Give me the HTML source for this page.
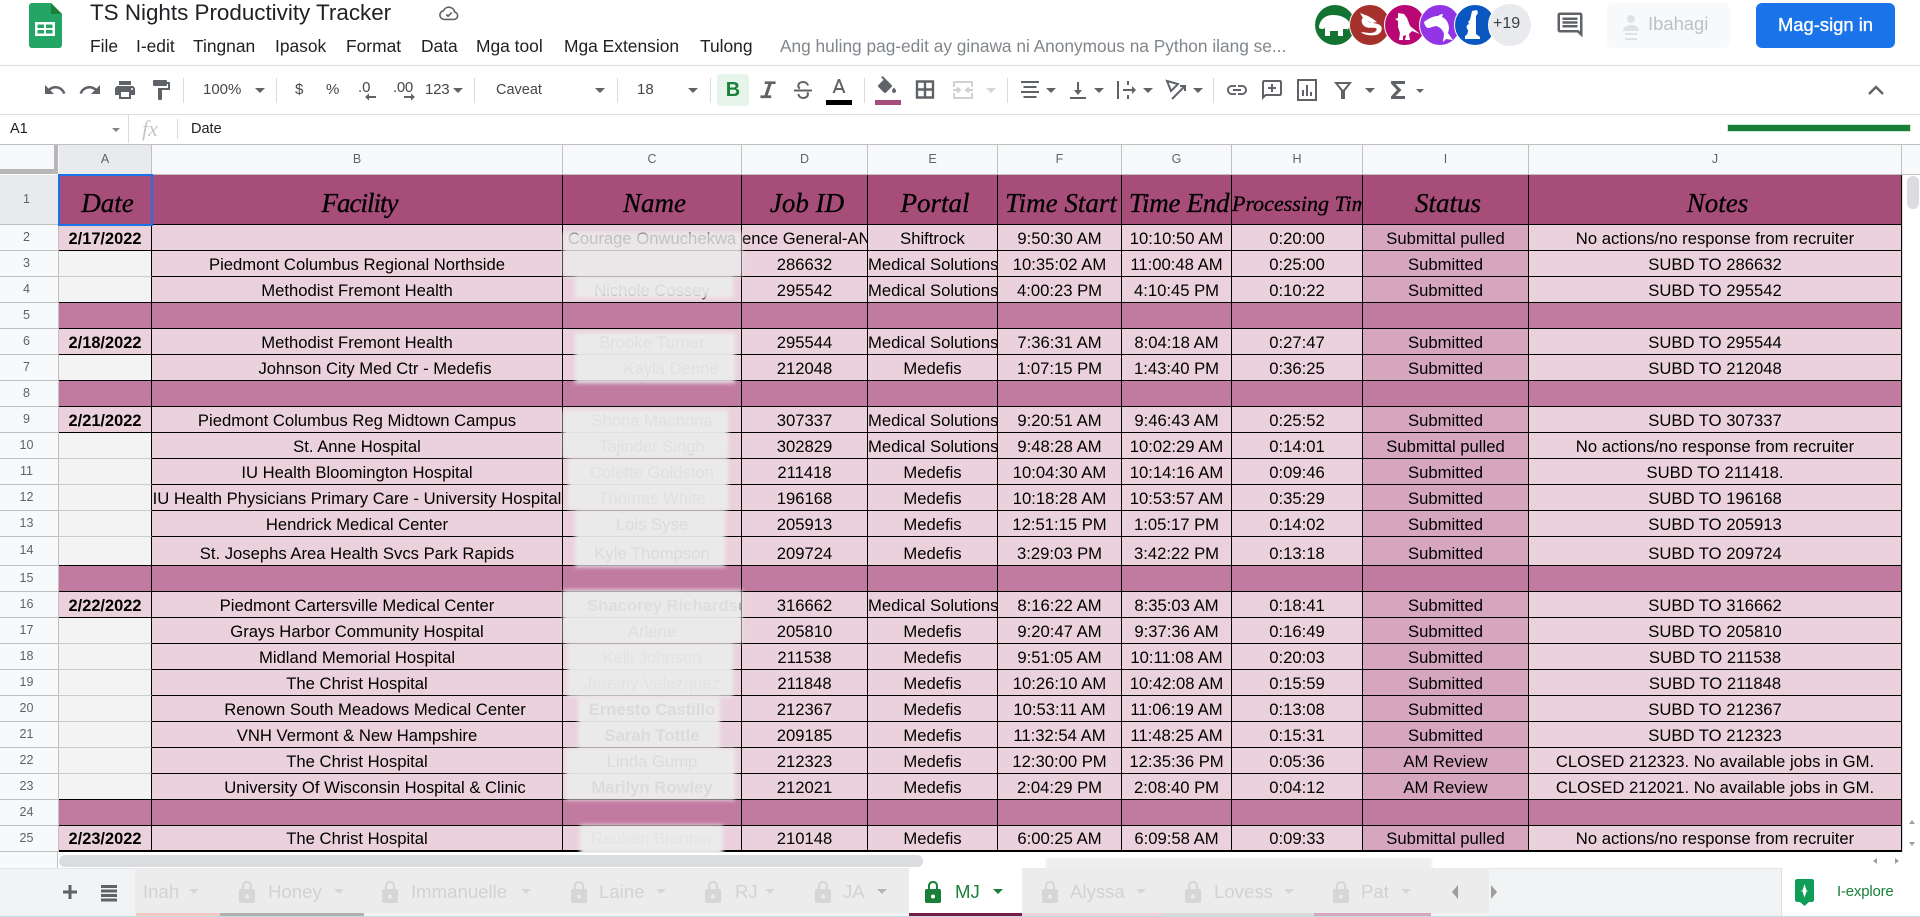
<!DOCTYPE html>
<html><head><meta charset="utf-8"><title>TS Nights Productivity Tracker</title>
<style>
html,body{margin:0;padding:0;width:1920px;height:917px;overflow:hidden;background:#fff;font-family:"Liberation Sans",sans-serif;color:#000}
.a{position:absolute;white-space:nowrap}
.m{position:absolute;top:36px;font-size:17.4px;line-height:20px;color:#202124;white-space:nowrap}
.ic{position:absolute;top:78px;width:24px;height:24px;fill:#5f6368}
.st{fill:none;stroke:#5f6368;stroke-width:2}
.sep{position:absolute;top:78px;width:1px;height:25px;background:#dadce0}
.car{position:absolute;top:88px;width:0;height:0;border-left:5px solid transparent;border-right:5px solid transparent;border-top:5px solid #5f6368}
.t{position:absolute;top:81px;font-size:15px;line-height:18px;color:#444746;white-space:nowrap}
.ch{position:absolute;top:145px;height:29px;line-height:29px;text-align:center;font-size:12.5px;color:#5f6368;background:#f8f9fa;border-right:1px solid #c0c0c0;box-sizing:border-box}
table{position:absolute;left:59px;top:175px;border-collapse:separate;border-spacing:0;table-layout:fixed;width:1843px;font-size:16.65px;background:#ead1dc}
td{padding:2px 0 0;border-right:1px solid #000;border-bottom:1px solid #000;text-align:center;vertical-align:middle;white-space:nowrap;overflow:hidden;background:#ead1dc;line-height:20px;box-sizing:border-box}
tr{height:26px}
tr.h{height:50px}
tr.h td{background:#a64d79;font-family:"Liberation Serif",serif;font-style:italic;font-size:27px;line-height:40px;-webkit-text-stroke:.3px #000;padding:7px 0 0 5px}
tr.s td{background:#c27ba0}
td.d{font-weight:bold;font-size:16.4px}
td.e{background:#f3f3f3;border-bottom-color:#cccccc}
td.i{background:#d5a6bd}
tr.s td.i{background:#c27ba0}
td.sh{padding-left:36px}
.rh{position:absolute;left:0;width:59px;text-align:center;font-size:12.5px;color:#5f6368;background:#f8f9fa;border-right:1px solid #c0c0c0;border-bottom:1px solid #c0c0c0;box-sizing:border-box;padding-right:5px}
.p{position:absolute;background:#ececec;opacity:.9;filter:blur(2px)}
.tb{position:absolute;top:882px;font-size:18.6px;line-height:20px;color:#d2d2d2;white-space:nowrap}
.lk{position:absolute;top:881px;width:16px;height:22px;fill:#d6d6d6}
.tc{position:absolute;top:889px;width:0;height:0;border-left:5px solid transparent;border-right:5px solid transparent;border-top:5px solid #d6d6d6}
</style></head><body>
<svg width="0" height="0" style="position:absolute"><defs>
<symbol id="lock" viewBox="0 0 16 22"><path d="M8 0C4.7 0 3 2.4 3 5v3H1.500C.7 8 0 8.700 0 9.500v11c0 .8.7 1.500 1.500 1.500h13c.8 0 1.500-.7 1.500-1.500v-11C16 8.700 15.300 8 14.500 8H13V5c0-2.600-1.700-5-5-5zM5 8V5c0-1.600 1-3 3-3s3 1.400 3 3v3zm3 5.500a2 2 0 1 1 0 4 2 2 0 0 1 0-4z" fill-rule="evenodd"/></symbol>
</defs></svg>

<!-- title bar -->
<svg class="a" style="left:29px;top:3px" width="33" height="45" viewBox="0 0 33 45"><path d="M3 0h19l11 11v31c0 1.700-1.300 3-3 3H3c-1.700 0-3-1.300-3-3V3C0 1.300 1.300 0 3 0z" fill="#23a566"/><path d="M22 0l11 11H22z" fill="#188038"/><path d="M6 19h20v14H6z" fill="#fff"/><path d="M8.500 21.500h6.500v3.500H8.500zm8.500 0h6.500v3.500H17zM8.500 27h6.500v3.500H8.500zm8.500 0h6.500v3.500H17z" fill="#23a566"/></svg>
<div class="a" style="left:90px;top:0;font-size:22.4px;line-height:26px;color:#202124">TS Nights Productivity Tracker</div>
<svg class="a" style="left:438px;top:2px" width="22" height="22" viewBox="0 0 24 24" fill="none" stroke="#5f6368" stroke-width="1.800"><path d="M6.500 19h11a4 4 0 0 0 .8-7.900A6.500 6.500 0 0 0 6 9.500 4.800 4.800 0 0 0 6.500 19z"/><path d="M9 13.500l2 2 4-4"/></svg>

<div class="m" style="left:90px">File</div>
<div class="m" style="left:136px">I-edit</div>
<div class="m" style="left:193px">Tingnan</div>
<div class="m" style="left:275px">Ipasok</div>
<div class="m" style="left:346px">Format</div>
<div class="m" style="left:421px">Data</div>
<div class="m" style="left:476px">Mga tool</div>
<div class="m" style="left:564px">Mga Extension</div>
<div class="m" style="left:700px">Tulong</div>
<div class="m" style="left:780px;color:#80868b;font-size:17.3px">Ang huling pag-edit ay ginawa ni Anonymous na Python ilang se...</div>

<!-- avatars -->
<svg class="a" style="left:1310px;top:0" width="226" height="50" viewBox="0 0 226 50">
<circle cx="25" cy="25" r="20" fill="#137333"/><path d="M9 27c1-8 7-12 14-12 6 0 13 2 16 7v6l-2 2v-1h-4v7h-5v-5h-8v5h-5v-8l-2 1c-3 0-4-1-4-2z" fill="#fff"/>
<circle cx="60" cy="25" r="20.500" fill="#a5302c" stroke="#fff"/><path d="M50 13l8 3 5 3 4 3-5 1-4-2c2 3 9 1 13 5 2 3 0 8-5 9-5 1-13 0-15-3l9 1c4 0 8-2 6-5-3-1-8 1-12-2-3-3-3-7-1-8z" fill="#fff"/>
<circle cx="95" cy="25" r="20.500" fill="#b80672" stroke="#fff"/><path d="M88 13l6 1 3 4 3 8 10 8-8-3-3 3 1 6h-5l1-5-3 1v4h-4l1-7-2-6v-6l-3-2 3-1z" fill="#fff"/>
<circle cx="130" cy="25" r="20.500" fill="#9334e6" stroke="#fff"/><path d="M114 22c4-3 9-6 14-6 2-2 5-2 5-2l-1 3c5 2 7 7 7 12l-1 4 5 7-7-1-3 3c0-3 1-5 1-8-1-4-4-7-8-8l-4 1-3 1c-2 0-4-1-5-6z" fill="#fff"/>
<circle cx="165" cy="25" r="20.500" fill="#0b57c2" stroke="#fff"/><path d="M162 11l5-1 1 3-2 3v18l4 3v2h-15v-3c2-1 3-3 3-6-2-2-2-5 1-6-1-2-1-3 1-4z" fill="#fff"/>
<circle cx="200" cy="25" r="21.500" fill="#e8eaed" stroke="#fff"/>
</svg>
<div class="a" style="left:1493px;top:14px;font-size:16px;line-height:20px;color:#3c4043">+19</div>
<svg class="a" style="left:1555px;top:10px" width="30" height="30" viewBox="0 0 24 24" fill="#5f6368"><path d="M20 17.170L18.830 16H4V4h16v13.170zM20 2H4c-1.100 0-2 .9-2 2v12c0 1.100.9 2 2 2h14l4 4V4c0-1.100-.9-2-2-2z"/><path d="M6 12h12v2H6zm0-3h12v2H6zm0-3h12v2H6z"/></svg>
<div class="a" style="left:1607px;top:3px;width:123px;height:45px;background:#f8f9fa;border-radius:6px"></div>
<svg class="a" style="left:1622px;top:14px" width="18" height="28" viewBox="0 0 18 28" fill="#dfe1e5"><circle cx="9" cy="5" r="4"/><path d="M1 17c0-4 4-6 8-6s8 2 8 6z"/><path d="M3 20h12M3 25h12" stroke="#dfe1e5" stroke-width="2"/></svg>
<div class="a" style="left:1648px;top:14px;font-size:18.4px;line-height:20px;color:#bdc1c6">Ibahagi</div>
<div class="a" style="left:1756px;top:3px;width:139px;height:45px;line-height:44px;background:#1a73e8;border-radius:6px;color:#fff;text-align:center;font-size:18.4px;-webkit-text-stroke:.35px #fff">Mag-sign in</div>

<div class="a" style="left:0;top:65px;width:1920px;height:1px;background:#dadce0"></div>
<div class="a" style="left:0;top:114px;width:1920px;height:1px;background:#dadce0"></div>

<!-- toolbar -->
<svg class="ic" style="left:43px" viewBox="0 0 24 24"><path d="M12.500 8c-2.650 0-5.050.99-6.900 2.600L2 7v9h9l-3.620-3.620c1.390-1.160 3.160-1.880 5.120-1.880 3.540 0 6.550 2.310 7.600 5.500l2.370-.78C21.080 11.030 17.150 8 12.500 8z"/></svg>
<svg class="ic" style="left:78px" viewBox="0 0 24 24"><path d="M18.400 10.600C16.550 8.990 14.150 8 11.500 8c-4.650 0-8.580 3.030-9.960 7.220L3.900 16c1.050-3.190 4.050-5.500 7.600-5.500 1.950 0 3.730.72 5.120 1.880L13 16h9V7l-3.600 3.600z"/></svg>
<svg class="ic" style="left:113px" viewBox="0 0 24 24"><path d="M19 8H5c-1.660 0-3 1.340-3 3v6h4v4h12v-4h4v-6c0-1.660-1.340-3-3-3zm-3 11H8v-5h8v5zm3-7c-.55 0-1-.45-1-1s.45-1 1-1 1 .45 1 1-.45 1-1 1zm-1-9H6v4h12V3z"/></svg>
<svg class="ic" style="left:149px" viewBox="0 0 24 24"><path d="M18 4V3c0-.55-.45-1-1-1H5c-.55 0-1 .45-1 1v4c0 .55.45 1 1 1h12c.55 0 1-.45 1-1V6h1v4H9v11c0 .55.45 1 1 1h2c.55 0 1-.45 1-1v-9h8V4h-3z"/></svg>
<div class="sep" style="left:183px"></div>
<div class="t" style="left:203px">100%</div><div class="car" style="left:255px"></div>
<div class="sep" style="left:276px"></div>
<div class="t" style="left:295px">$</div>
<div class="t" style="left:326px">%</div>
<div class="t" style="left:358px;top:79px">.0</div>
<svg class="a" style="left:365px;top:93px" width="11" height="8" viewBox="0 0 11 8" fill="#5f6368"><path d="M0 4l4-3.500V3h7v2H4v2.500z"/></svg>
<div class="t" style="left:393px;top:79px;letter-spacing:-.3px">.00</div>
<svg class="a" style="left:404px;top:93px" width="11" height="8" viewBox="0 0 11 8" fill="#5f6368"><path d="M11 4L7 .5V3H0v2h7v2.500z"/></svg>
<div class="t" style="left:425px;letter-spacing:-.2px">123</div><div class="car" style="left:453px"></div>
<div class="sep" style="left:474px"></div>
<div class="t" style="left:496px;font-size:14.5px">Caveat</div><div class="car" style="left:595px"></div>
<div class="sep" style="left:617px"></div>
<div class="t" style="left:637px">18</div><div class="car" style="left:688px"></div>
<div class="sep" style="left:710px"></div>
<div class="a" style="left:717px;top:74px;width:32px;height:32px;background:#e6f4ea;border-radius:3px"></div>
<div class="a" style="left:717px;top:79px;width:32px;text-align:center;font-size:20px;line-height:23px;font-weight:bold;color:#188038">B</div>
<svg class="ic" style="left:755px;top:77px;width:26px;height:26px" viewBox="0 0 24 24"><path d="M9 4v2.500h3.300L8.700 17H5v2.500h10V17h-3.300l3.600-10.500H19V4z"/></svg>
<svg class="ic" style="left:791px" viewBox="0 0 24 24"><path class="st" d="M17 7.500C16.500 5.500 14.500 4 12 4 9.300 4 7.300 5.500 7.300 7.800c0 1.200.6 2.200 1.700 2.700M7.300 16c.3 2.200 2.200 4 4.800 4 2.800 0 4.800-1.600 4.800-3.800 0-.8-.2-1.500-.6-2"/><path class="st" d="M3 12.500h18"/></svg>
<svg class="ic" style="left:827px;top:76px" viewBox="0 0 24 24"><path d="M11 3L5.500 17h2.250l1.120-3h6.250l1.120 3h2.250L13 3h-2zm-1.380 9L12 5.670 14.380 12H9.620z"/></svg>
<div class="a" style="left:826px;top:100px;width:26px;height:5px;background:#000"></div>
<div class="sep" style="left:864px"></div>
<svg class="ic" style="left:875px;top:76px" viewBox="0 0 24 24"><path d="M16.560 8.940L7.620 0 6.210 1.410l2.380 2.380-5.150 5.150c-.59.59-.59 1.540 0 2.120l5.500 5.500c.29.29.68.44 1.060.44s.77-.15 1.060-.44l5.500-5.500c.59-.58.59-1.530 0-2.120zM19 11.500s-2 2.170-2 3.500c0 1.100.9 2 2 2s2-.9 2-2c0-1.330-2-3.500-2-3.500z"/></svg>
<div class="a" style="left:875px;top:100px;width:26px;height:5px;background:#a64d79"></div>
<svg class="ic" style="left:913px" viewBox="0 0 24 24"><path class="st" style="stroke-width:2.400" d="M4 3.500h16v16H4zM12 3.500v16M4 11.500h16"/></svg>
<svg class="ic" style="left:951px" viewBox="0 0 24 24"><path fill="none" stroke="#cfd1d3" stroke-width="2" d="M3 9V4h18v5M3 15v5h18v-5M2 12h7M15 12h7M6 9.500L9 12l-3 2.500M18 9.500L15 12l3 2.500"/></svg>
<div class="car" style="left:986px;border-top-color:#d4d6d8"></div>
<div class="sep" style="left:1007px"></div>
<svg class="ic" style="left:1018px" viewBox="0 0 24 24"><path d="M3 3h18v2H3zM5.500 8h13v2h-13zM3 13h18v2H3zM5.500 18h13v2h-13z"/></svg><div class="car" style="left:1046px"></div>
<svg class="ic" style="left:1066px" viewBox="0 0 24 24"><path d="M4 19h16v2H4zM11 4h2v8h3l-4 5-4-5h3z"/></svg><div class="car" style="left:1094px"></div>
<svg class="ic" style="left:1115px" viewBox="0 0 24 24"><path d="M2 3h2v18H2zM12 3h2v4h-2zM12 17h2v4h-2zM8 11h9V8l4 4-4 4v-3H8z"/></svg><div class="car" style="left:1143px"></div>
<svg class="ic" style="left:1164px" viewBox="0 0 24 24"><path class="st" d="M3 3l11 3-7 7zM8 21L21 8M16 8h5v5"/></svg><div class="car" style="left:1193px"></div>
<div class="sep" style="left:1213px"></div>
<svg class="ic" style="left:1225px" viewBox="0 0 24 24"><path d="M3.900 12c0-1.710 1.390-3.100 3.100-3.100h4V7H7c-2.760 0-5 2.240-5 5s2.240 5 5 5h4v-1.900H7c-1.710 0-3.100-1.390-3.100-3.100zM8 13h8v-2H8v2zm9-6h-4v1.900h4c1.710 0 3.100 1.390 3.100 3.100s-1.390 3.100-3.100 3.100h-4V17h4c2.760 0 5-2.240 5-5s-2.240-5-5-5z"/></svg>
<svg class="ic" style="left:1260px" viewBox="0 0 24 24"><path d="M20 2H4c-1.100 0-2 .9-2 2v18l4-4h14c1.100 0 2-.9 2-2V4c0-1.100-.9-2-2-2zm0 14H5.170L4 17.170V4h16v12zM11 6h2v3h3v2h-3v3h-2v-3H8V9h3z"/></svg>
<svg class="ic" style="left:1295px" viewBox="0 0 24 24"><path d="M2 1h20v22H2zm2 2v18h16V3zM7 12h2v6H7zm4-5h2v11h-2zm4 7h2v4h-2z" fill-rule="evenodd"/></svg>
<svg class="ic" style="left:1331px" viewBox="0 0 24 24"><path d="M3 4h18l-7 9v8h-4v-8zm4 2l5 6 5-6z" fill-rule="evenodd"/></svg><div class="car" style="left:1365px"></div>
<svg class="ic" style="left:1386px" viewBox="0 0 24 24"><path d="M5 3h14v3H9.500l6 6-6 6H19v3H5v-2.500L11 12 5 5.500z"/></svg><div class="car" style="left:1416px;border-left-width:4px;border-right-width:4px;border-top-width:4px;top:89px"></div>
<svg class="a" style="left:1864px;top:78px" width="24" height="24" viewBox="0 0 24 24" fill="none" stroke="#5f6368" stroke-width="2.400"><path d="M5 16l7-7 7 7"/></svg>

<!-- formula bar -->
<div class="a" style="left:10px;top:120px;font-size:14.5px;line-height:18px;color:#202124">A1</div>
<div class="a" style="left:112px;top:128px;width:0;height:0;border-left:4px solid transparent;border-right:4px solid transparent;border-top:4px solid #80868b"></div>
<div class="a" style="left:128px;top:115px;width:1px;height:28px;background:#dadce0"></div>
<div class="a" style="left:142px;top:116px;font-family:'Liberation Serif',serif;font-style:italic;font-size:22px;line-height:26px;color:#c6c6c6">fx</div>
<div class="a" style="left:177px;top:119px;width:1px;height:20px;background:#dadce0"></div>
<div class="a" style="left:191px;top:120px;font-size:14.5px;line-height:18px;color:#202124">Date</div>
<div class="a" style="left:1727px;top:124px;width:184px;height:8px;background:#ceead6"></div>
<div class="a" style="left:1728px;top:125px;width:182px;height:6px;background:#188038"></div>

<!-- column headers -->
<div class="a" style="left:0;top:144px;width:1920px;height:1px;background:#c0c0c0"></div>
<div class="a" style="left:0;top:145px;width:59px;height:29px;background:#f8f9fa"></div>
<div class="a" style="left:54px;top:145px;width:4px;height:29px;background:#b7b7b7"></div>
<div class="a" style="left:0;top:169px;width:58px;height:5px;background:#b7b7b7"></div>
<div class="ch" style="left:59px;width:93px;background:#e8eaed">A</div>
<div class="ch" style="left:152px;width:411px">B</div>
<div class="ch" style="left:563px;width:179px">C</div>
<div class="ch" style="left:742px;width:126px">D</div>
<div class="ch" style="left:868px;width:130px">E</div>
<div class="ch" style="left:998px;width:124px">F</div>
<div class="ch" style="left:1122px;width:110px">G</div>
<div class="ch" style="left:1232px;width:131px">H</div>
<div class="ch" style="left:1363px;width:166px">I</div>
<div class="ch" style="left:1529px;width:373px">J</div>
<div class="a" style="left:1902px;top:145px;width:18px;height:29px;background:#f8f9fa"></div>
<div class="a" style="left:58px;top:174px;width:1862px;height:1px;background:#c0c0c0"></div>

<!-- row headers -->
<div class="rh" style="top:175px;height:50px;line-height:49px;background:#e8eaed">1</div>
<div class="rh" style="top:225px;height:26px;line-height:24px">2</div>
<div class="rh" style="top:251px;height:26px;line-height:24px">3</div>
<div class="rh" style="top:277px;height:26px;line-height:24px">4</div>
<div class="rh" style="top:303px;height:26px;line-height:24px">5</div>
<div class="rh" style="top:329px;height:26px;line-height:24px">6</div>
<div class="rh" style="top:355px;height:26px;line-height:24px">7</div>
<div class="rh" style="top:381px;height:26px;line-height:24px">8</div>
<div class="rh" style="top:407px;height:26px;line-height:24px">9</div>
<div class="rh" style="top:433px;height:26px;line-height:24px">10</div>
<div class="rh" style="top:459px;height:26px;line-height:24px">11</div>
<div class="rh" style="top:485px;height:26px;line-height:24px">12</div>
<div class="rh" style="top:511px;height:26px;line-height:24px">13</div>
<div class="rh" style="top:537px;height:29px;line-height:27px">14</div>
<div class="rh" style="top:566px;height:26px;line-height:24px">15</div>
<div class="rh" style="top:592px;height:26px;line-height:24px">16</div>
<div class="rh" style="top:618px;height:26px;line-height:24px">17</div>
<div class="rh" style="top:644px;height:26px;line-height:24px">18</div>
<div class="rh" style="top:670px;height:26px;line-height:24px">19</div>
<div class="rh" style="top:696px;height:26px;line-height:24px">20</div>
<div class="rh" style="top:722px;height:26px;line-height:24px">21</div>
<div class="rh" style="top:748px;height:26px;line-height:24px">22</div>
<div class="rh" style="top:774px;height:26px;line-height:24px">23</div>
<div class="rh" style="top:800px;height:26px;line-height:24px">24</div>
<div class="rh" style="top:826px;height:26px;line-height:24px">25</div>

<table>
<colgroup><col style="width:93px"><col style="width:411px"><col style="width:179px"><col style="width:126px"><col style="width:130px"><col style="width:124px"><col style="width:110px"><col style="width:131px"><col style="width:166px"><col style="width:373px"></colgroup>
<tr class="h"><td>Date</td><td style="letter-spacing:-1px">Facility</td><td>Name</td><td>Job ID</td><td>Portal</td><td style="padding-left:3px">Time Start</td><td style="padding-left:5px;letter-spacing:-.3px">Time End</td><td style="font-size:22px;text-align:left;padding:9px 0 0">Processing Time</td><td>Status</td><td>Notes</td></tr>
<tr><td class="d">2/17/2022</td><td></td><td>Courage Onwuchekwa</td><td style="text-align:left">ence General-AN</td><td>Shiftrock</td><td>9:50:30 AM</td><td>10:10:50 AM</td><td>0:20:00</td><td class="i">Submittal pulled</td><td>No actions/no response from recruiter</td></tr>
<tr><td class="e"></td><td>Piedmont Columbus Regional Northside</td><td></td><td>286632</td><td>Medical Solutions</td><td>10:35:02 AM</td><td>11:00:48 AM</td><td>0:25:00</td><td class="i">Submitted</td><td>SUBD TO 286632</td></tr>
<tr><td class="e" style="border-bottom-color:#000"></td><td>Methodist Fremont Health</td><td>Nichole Cossey</td><td>295542</td><td>Medical Solutions</td><td>4:00:23 PM</td><td>4:10:45 PM</td><td>0:10:22</td><td class="i">Submitted</td><td>SUBD TO 295542</td></tr>
<tr class="s"><td></td><td></td><td></td><td></td><td></td><td></td><td></td><td></td><td class="i"></td><td></td></tr>
<tr><td class="d">2/18/2022</td><td>Methodist Fremont Health</td><td>Brooke Turner</td><td>295544</td><td>Medical Solutions</td><td>7:36:31 AM</td><td>8:04:18 AM</td><td>0:27:47</td><td class="i">Submitted</td><td>SUBD TO 295544</td></tr>
<tr><td class="e" style="border-bottom-color:#000"></td><td class="sh">Johnson City Med Ctr - Medefis</td><td style="padding-left:38px">Kayla Denne</td><td>212048</td><td>Medefis</td><td>1:07:15 PM</td><td>1:43:40 PM</td><td>0:36:25</td><td class="i">Submitted</td><td>SUBD TO 212048</td></tr>
<tr class="s"><td></td><td></td><td></td><td></td><td></td><td></td><td></td><td></td><td class="i"></td><td></td></tr>
<tr><td class="d">2/21/2022</td><td>Piedmont Columbus Reg Midtown Campus</td><td>Shona Machona</td><td>307337</td><td>Medical Solutions</td><td>9:20:51 AM</td><td>9:46:43 AM</td><td>0:25:52</td><td class="i">Submitted</td><td>SUBD TO 307337</td></tr>
<tr><td class="e"></td><td>St. Anne Hospital</td><td>Tajinder Singh</td><td>302829</td><td>Medical Solutions</td><td>9:48:28 AM</td><td>10:02:29 AM</td><td>0:14:01</td><td class="i">Submittal pulled</td><td>No actions/no response from recruiter</td></tr>
<tr><td class="e"></td><td>IU Health Bloomington Hospital</td><td>Colette Goldston</td><td>211418</td><td>Medefis</td><td>10:04:30 AM</td><td>10:14:16 AM</td><td>0:09:46</td><td class="i">Submitted</td><td>SUBD TO 211418.</td></tr>
<tr><td class="e"></td><td>IU Health Physicians Primary Care - University Hospital</td><td>Thomas White</td><td>196168</td><td>Medefis</td><td>10:18:28 AM</td><td>10:53:57 AM</td><td>0:35:29</td><td class="i">Submitted</td><td>SUBD TO 196168</td></tr>
<tr><td class="e"></td><td>Hendrick Medical Center</td><td>Lois Syse</td><td>205913</td><td>Medefis</td><td>12:51:15 PM</td><td>1:05:17 PM</td><td>0:14:02</td><td class="i">Submitted</td><td>SUBD TO 205913</td></tr>
<tr style="height:29px"><td class="e" style="border-bottom-color:#000"></td><td style="padding-top:6px">St. Josephs Area Health Svcs Park Rapids</td><td style="padding-top:6px">Kyle Thompson</td><td style="padding-top:6px">209724</td><td style="padding-top:6px">Medefis</td><td style="padding-top:6px">3:29:03 PM</td><td style="padding-top:6px">3:42:22 PM</td><td style="padding-top:6px">0:13:18</td><td class="i" style="padding-top:6px">Submitted</td><td style="padding-top:6px">SUBD TO 209724</td></tr>
<tr class="s"><td></td><td></td><td></td><td></td><td></td><td></td><td></td><td></td><td class="i"></td><td></td></tr>
<tr><td class="d">2/22/2022</td><td>Piedmont Cartersville Medical Center</td><td style="text-align:left;padding-left:24px;font-weight:bold">Shacorey Richardson</td><td>316662</td><td>Medical Solutions</td><td>8:16:22 AM</td><td>8:35:03 AM</td><td>0:18:41</td><td class="i">Submitted</td><td>SUBD TO 316662</td></tr>
<tr><td class="e"></td><td>Grays Harbor Community Hospital</td><td>Arlene</td><td>205810</td><td>Medefis</td><td>9:20:47 AM</td><td>9:37:36 AM</td><td>0:16:49</td><td class="i">Submitted</td><td>SUBD TO 205810</td></tr>
<tr><td class="e"></td><td>Midland Memorial Hospital</td><td>Kelli Johnson</td><td>211538</td><td>Medefis</td><td>9:51:05 AM</td><td>10:11:08 AM</td><td>0:20:03</td><td class="i">Submitted</td><td>SUBD TO 211538</td></tr>
<tr><td class="e"></td><td>The Christ Hospital</td><td>Jeremy Velazquez</td><td>211848</td><td>Medefis</td><td>10:26:10 AM</td><td>10:42:08 AM</td><td>0:15:59</td><td class="i">Submitted</td><td>SUBD TO 211848</td></tr>
<tr><td class="e"></td><td class="sh">Renown South Meadows Medical Center</td><td style="font-weight:bold">Ernesto Castillo</td><td>212367</td><td>Medefis</td><td>10:53:11 AM</td><td>11:06:19 AM</td><td>0:13:08</td><td class="i">Submitted</td><td>SUBD TO 212367</td></tr>
<tr><td class="e"></td><td>VNH Vermont &amp; New Hampshire</td><td style="font-weight:bold">Sarah Tottle</td><td>209185</td><td>Medefis</td><td>11:32:54 AM</td><td>11:48:25 AM</td><td>0:15:31</td><td class="i">Submitted</td><td>SUBD TO 212323</td></tr>
<tr><td class="e"></td><td>The Christ Hospital</td><td>Linda Gump</td><td>212323</td><td>Medefis</td><td>12:30:00 PM</td><td>12:35:36 PM</td><td>0:05:36</td><td class="i">AM Review</td><td>CLOSED 212323. No available jobs in GM.</td></tr>
<tr><td class="e" style="border-bottom-color:#000"></td><td class="sh">University Of Wisconsin Hospital &amp; Clinic</td><td style="font-weight:bold">Marilyn Rowley</td><td>212021</td><td>Medefis</td><td>2:04:29 PM</td><td>2:08:40 PM</td><td>0:04:12</td><td class="i">AM Review</td><td>CLOSED 212021. No available jobs in GM.</td></tr>
<tr class="s"><td></td><td></td><td></td><td></td><td></td><td></td><td></td><td></td><td class="i"></td><td></td></tr>
<tr><td class="d" style="border-bottom-width:2px">2/23/2022</td><td style="border-bottom-width:2px">The Christ Hospital</td><td style="border-bottom-width:2px">Reuben Brenner</td><td style="border-bottom-width:2px">210148</td><td style="border-bottom-width:2px">Medefis</td><td style="border-bottom-width:2px">6:00:25 AM</td><td style="border-bottom-width:2px">6:09:58 AM</td><td style="border-bottom-width:2px">0:09:33</td><td class="i" style="border-bottom-width:2px">Submittal pulled</td><td style="border-bottom-width:2px">No actions/no response from recruiter</td></tr>
</table>

<!-- A1 selection -->
<div class="a" style="left:58px;top:174px;width:91px;height:48px;border:2px solid #1a73e8"></div>

<!-- name column smudges -->
<div class="p" style="left:563px;top:232px;width:179px;height:45px;opacity:.82"></div>
<div class="p" style="left:575px;top:276px;width:158px;height:22px;opacity:.93"></div>
<div class="p" style="left:575px;top:333px;width:160px;height:50px;opacity:.95"></div>
<div class="p" style="left:563px;top:410px;width:165px;height:48px;opacity:.95"></div>
<div class="p" style="left:568px;top:458px;width:160px;height:52px;opacity:.95"></div>
<div class="p" style="left:575px;top:510px;width:150px;height:57px;opacity:.93"></div>
<div class="p" style="left:563px;top:590px;width:179px;height:53px;opacity:.94"></div>
<div class="p" style="left:567px;top:643px;width:166px;height:54px;opacity:.96"></div>
<div class="p" style="left:578px;top:697px;width:142px;height:51px;opacity:.93"></div>
<div class="p" style="left:565px;top:748px;width:170px;height:52px;opacity:.93"></div>
<div class="p" style="left:580px;top:825px;width:143px;height:40px;opacity:.97"></div>

<!-- right scroll column -->
<div class="a" style="left:1902px;top:175px;width:18px;height:680px;background:#fff;border-left:1px solid #dadce0;box-sizing:border-box"></div>
<div class="a" style="left:1907px;top:176px;width:12px;height:33px;background:#dadce0;border-radius:6px"></div>
<div class="a" style="left:1909px;top:820px;width:0;height:0;border-left:3px solid transparent;border-right:3px solid transparent;border-bottom:4px solid #9aa0a6"></div>
<div class="a" style="left:1909px;top:842px;width:0;height:0;border-left:3px solid transparent;border-right:3px solid transparent;border-top:4px solid #9aa0a6"></div>

<!-- horizontal scroll -->
<div class="a" style="left:0;top:852px;width:58px;height:16px;background:#f8f9fa"></div>
<div class="a" style="left:57px;top:852px;width:1px;height:16px;background:#c0c0c0"></div>
<div class="a" style="left:58px;top:853px;width:1862px;height:15px;background:#fff"></div>
<div class="a" style="left:59px;top:855px;width:864px;height:12px;background:#dadce0;border-radius:6px"></div>
<div class="a" style="left:1873px;top:858px;width:0;height:0;border-top:3px solid transparent;border-bottom:3px solid transparent;border-right:4px solid #9aa0a6"></div>
<div class="a" style="left:1895px;top:858px;width:0;height:0;border-top:3px solid transparent;border-bottom:3px solid transparent;border-left:4px solid #9aa0a6"></div>

<!-- tab bar -->
<div class="a" style="left:0;top:868px;width:1920px;height:49px;background:#f1f3f4;border-top:1px solid #e3e5e8;box-sizing:border-box"></div>
<div class="a" style="left:135px;top:868px;width:1354px;height:45px;background:#ececec"></div>
<div class="a" style="left:1046px;top:858px;width:386px;height:12px;background:#eeeeee;filter:blur(1px)"></div>
<div class="a" style="left:136px;top:913px;width:84px;height:3px;background:#f4c7c3"></div>
<div class="a" style="left:220px;top:913px;width:144px;height:3px;background:#b0b0b0"></div>
<div class="a" style="left:1022px;top:913px;width:142px;height:3px;background:#ead1dc"></div>
<div class="a" style="left:1164px;top:913px;width:150px;height:3px;background:#d9d9d9"></div>
<div class="a" style="left:1314px;top:913px;width:117px;height:3px;background:#d5a6bd"></div>
<svg class="a" style="left:60px;top:882px" width="20" height="20" viewBox="0 0 20 20" fill="#5f6368"><path d="M8.500 3h3v5.500H17v3h-5.500V17h-3v-5.500H3v-3h5.500z"/></svg>
<svg class="a" style="left:100px;top:884px" width="18" height="18" viewBox="0 0 18 18" fill="#5f6368"><path d="M1 1h16v3H1zm0 4.500h16v3H1zM1 10h16v3H1zm0 4.500h16v3H1z"/></svg>

<div class="tb" style="left:143px">Inah</div><div class="tc" style="left:189px"></div>
<svg class="lk" style="left:239px"><use href="#lock"/></svg><div class="tb" style="left:268px">Honey</div><div class="tc" style="left:334px"></div>
<svg class="lk" style="left:382px"><use href="#lock"/></svg><div class="tb" style="left:411px">Immanuelle</div><div class="tc" style="left:521px"></div>
<svg class="lk" style="left:571px"><use href="#lock"/></svg><div class="tb" style="left:599px">Laine</div><div class="tc" style="left:656px"></div>
<svg class="lk" style="left:705px"><use href="#lock"/></svg><div class="tb" style="left:735px">RJ</div><div class="tc" style="left:765px"></div>
<svg class="lk" style="left:815px"><use href="#lock"/></svg><div class="tb" style="left:843px">JA</div><div class="tc" style="left:877px;border-top-color:#b5b5b5"></div>
<div class="a" style="left:909px;top:868px;width:113px;height:45px;background:#fff"></div>
<div class="a" style="left:909px;top:913px;width:113px;height:3px;background:#741b47"></div>
<svg class="lk" style="left:925px;fill:#188038"><use href="#lock"/></svg>
<div class="tb" style="left:955px;color:#188038">MJ</div>
<div class="tc" style="left:993px;border-top-color:#188038"></div>
<svg class="lk" style="left:1042px"><use href="#lock"/></svg><div class="tb" style="left:1070px">Alyssa</div><div class="tc" style="left:1136px"></div>
<svg class="lk" style="left:1185px"><use href="#lock"/></svg><div class="tb" style="left:1214px">Lovess</div><div class="tc" style="left:1284px"></div>
<svg class="lk" style="left:1333px"><use href="#lock"/></svg><div class="tb" style="left:1361px">Pat</div><div class="tc" style="left:1401px"></div>
<div class="a" style="left:1452px;top:885px;width:0;height:0;border-top:7px solid transparent;border-bottom:7px solid transparent;border-right:6px solid #9d9d9d"></div>
<div class="a" style="left:1491px;top:885px;width:0;height:0;border-top:7px solid transparent;border-bottom:7px solid transparent;border-left:6px solid #9d9d9d"></div>

<div class="a" style="left:1781px;top:868px;width:139px;height:48px;background:#fff;border-left:1px solid #dadce0;box-sizing:border-box"></div>
<svg class="a" style="left:1795px;top:879px" width="19" height="27" viewBox="0 0 19 27"><path d="M2 0h15c1 0 2 1 2 2v19c0 1-1 2-2 2h-3l-4.500 4L5 23H2c-1 0-2-1-2-2V2C0 1 1 0 2 0z" fill="#0f9d58"/><path d="M9.500 5l2 6.500 2 .5-2 .5-2 6-2-6-2-.5 2-.5z" fill="#fff"/></svg>
<div class="a" style="left:1837px;top:883px;font-size:15px;line-height:18px;color:#188038;letter-spacing:-.2px">I-explore</div>
<div class="a" style="left:0;top:916px;width:1920px;height:1px;background:#c5dfe0"></div>
</body></html>
